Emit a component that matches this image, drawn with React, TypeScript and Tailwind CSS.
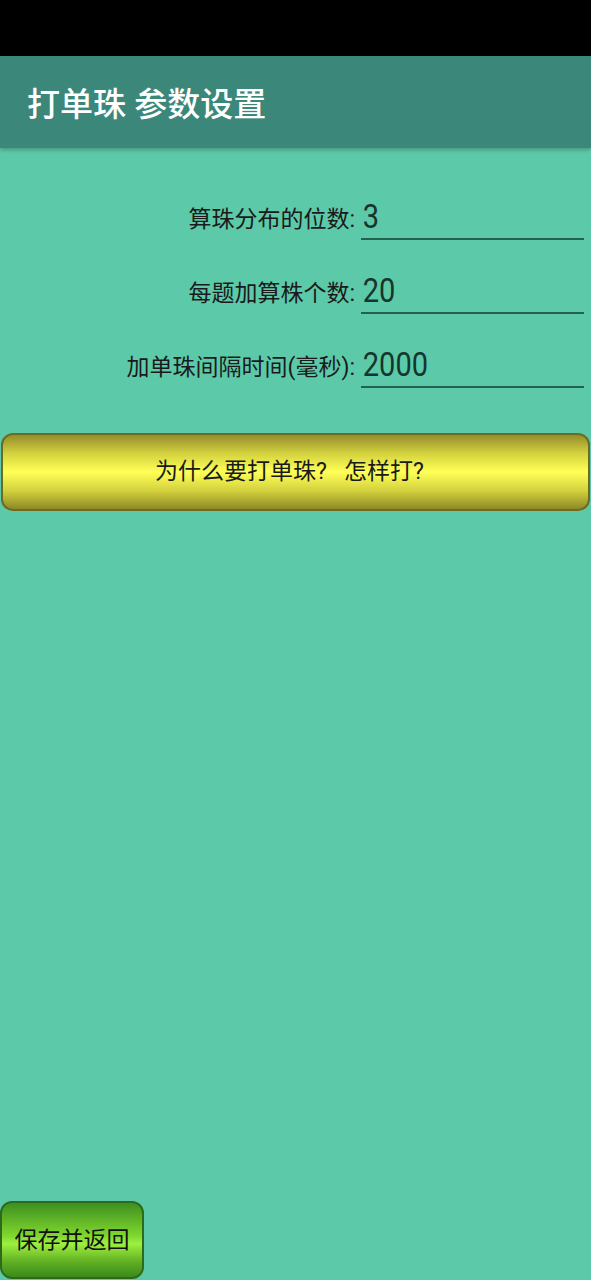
const font = "font-['Roboto','Noto_Sans_CJK_SC',sans-serif]";

function Field({ label, value }: { label: string; value: string }) {
  return (
    <div className="flex items-end h-[74px]">
      <div className="w-[355px] text-right text-[23px] text-[#1a1a1a] pb-[9px] leading-none whitespace-nowrap">{label}</div>
      <div className="ml-[6px] w-[223px] border-b-2 border-[#22604f] pb-[5px] text-[33px] leading-none text-[#16352d]">
        <span className="inline-block origin-left scale-x-[0.88] pl-[2px]">{value}</span>
      </div>
    </div>
  );
}

export default function App() {
  return (
    <div className={`${font} w-[591px] h-[1280px] bg-[#5ccaa9] flex flex-col overflow-hidden`}>
      {/* status bar */}
      <div className="h-[56px] bg-black shrink-0" />

      {/* header */}
      <div className="h-[92px] bg-[#3b877a] flex items-center px-[27px] shadow-[0_2px_4px_rgba(0,0,0,0.25)] shrink-0">
        <h1 className="text-white text-[33px] font-medium leading-none mt-[4px]">打单珠 参数设置</h1>
      </div>

      {/* fields */}
      <div className="pt-[18px]">
        <Field label="算珠分布的位数:" value="3" />
        <Field label="每题加算株个数:" value="20" />
        <Field label="加单珠间隔时间(毫秒):" value="2000" />
      </div>

      <button className="mt-[45px] mx-[1px] h-[78px] rounded-[12px] border-2 border-[#6f6a22] bg-[linear-gradient(to_bottom,#948d2c_0%,#d4d23e_25%,#ffff57_50%,#d4d23e_75%,#8e8828_100%)] text-[23px] text-[#1a1a1a] flex items-center justify-center pr-[12px]">
        为什么要打单珠?&nbsp;&nbsp;&nbsp;怎样打?
      </button>

      <div className="flex-1" />

      <button className="w-[144px] h-[78px] mb-[1px] rounded-[12px] border-2 border-[#2f6a1c] bg-[linear-gradient(to_bottom,#3f8f1f_0%,#80d82e_45%,#9ef040_55%,#5fae24_80%,#3a8a1a_100%)] text-[23px] text-[#111] flex items-center justify-center pt-[3px]">
        保存并返回
      </button>
    </div>
  );
}
